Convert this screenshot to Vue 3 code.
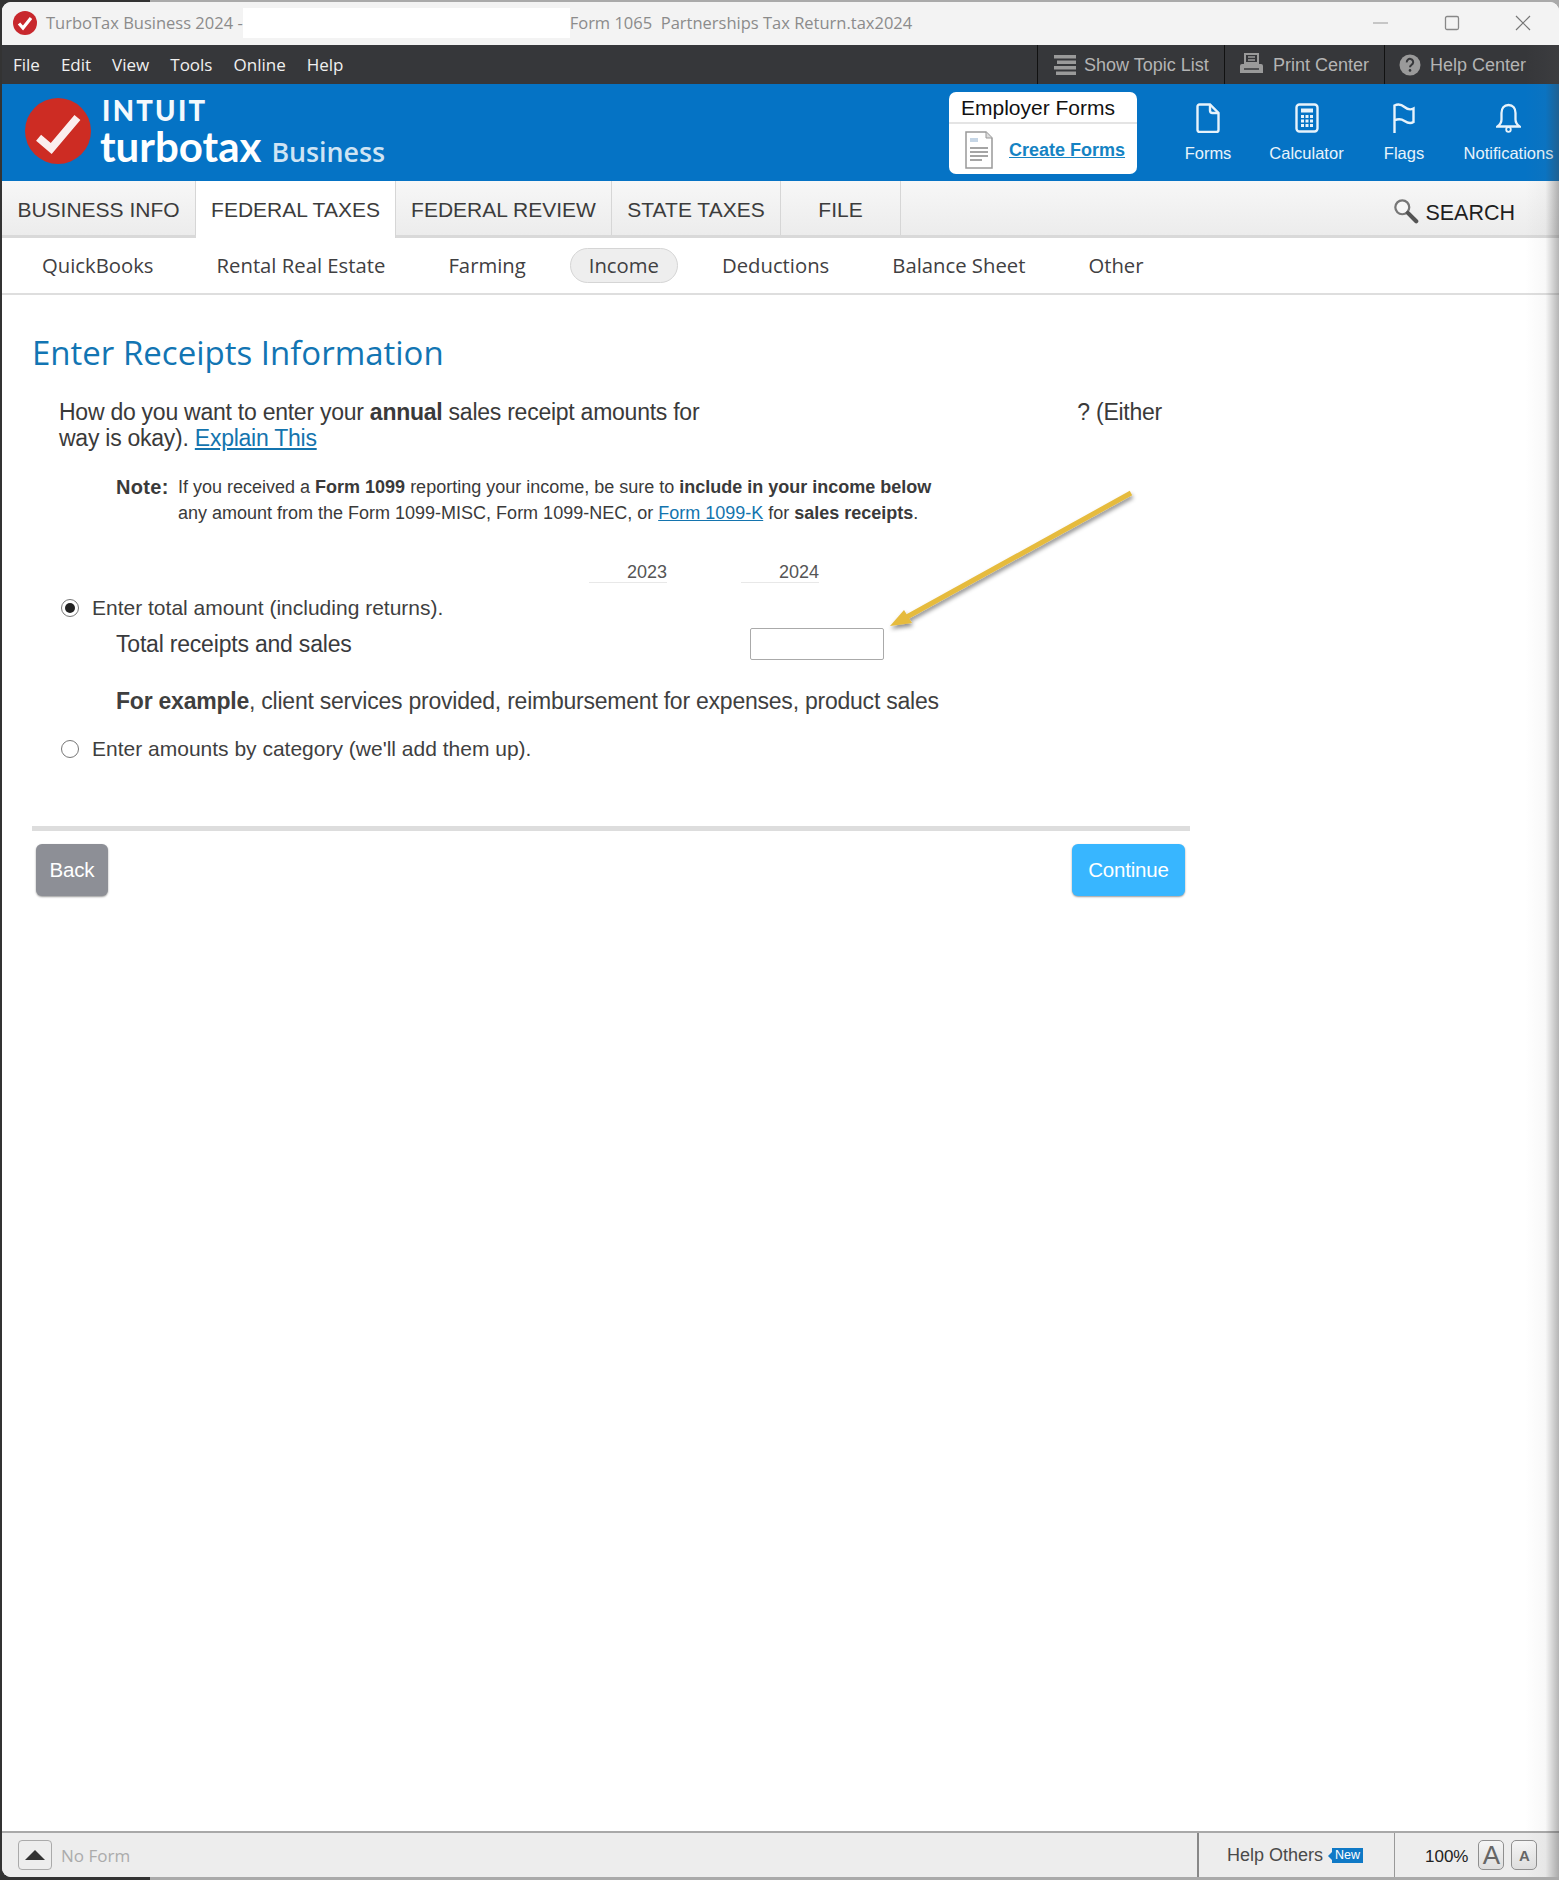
<script setup>
const menus = ['File', 'Edit', 'View', 'Tools', 'Online', 'Help']
const tabs = [
  { label: 'BUSINESS INFO', w: 194 },
  { label: 'FEDERAL TAXES', w: 200, active: true },
  { label: 'FEDERAL REVIEW', w: 216 },
  { label: 'STATE TAXES', w: 169 },
  { label: 'FILE', w: 120 }
]
const subs = ['QuickBooks', 'Rental Real Estate', 'Farming', 'Income', 'Deductions', 'Balance Sheet', 'Other']
</script>

<template>
  <div class="screen">
    <div class="window">
      <header class="titlebar">
        <svg class="app-icon" viewBox="0 0 24 24" width="24" height="24">
          <circle cx="12" cy="12" r="12" fill="#c8282d" />
          <path d="M6 12.5l4 4.5 8-10" fill="none" stroke="#fff" stroke-width="3.2" />
        </svg>
        <span class="title-text">TurboTax Business 2024 -</span>
        <span class="redact"></span>
        <span class="title-text">Form 1065&nbsp; Partnerships Tax Return.tax2024</span>
        <div class="win-controls">
          <svg width="18" height="18" viewBox="0 0 18 18"><path d="M1 9h15" stroke="#999" stroke-width="1.2" /></svg>
          <svg width="18" height="18" viewBox="0 0 18 18"><rect x="2.500" y="2.500" width="13" height="13" rx="1.500" fill="none" stroke="#888" stroke-width="1.300" /></svg>
          <svg width="18" height="18" viewBox="0 0 18 18"><path d="M2 2l14 14M16 2L2 16" stroke="#777" stroke-width="1.200" /></svg>
        </div>
      </header>

      <nav class="menubar">
        <div class="menus">
          <span v-for="m in menus" :key="m">{{ m }}</span>
        </div>
        <div class="tools">
          <div class="tool tool-topic">
            <svg width="24" height="22" viewBox="0 0 24 22"><path d="M1 1h22v3.500H1zM4 6.500h19V10H4zM1 12h22v3.500H1zM3 17.500h20V21H3z" fill="#9a9a9a" /></svg>
            <span>Show Topic List</span>
          </div>
          <div class="tool tool-print">
            <svg width="25" height="24" viewBox="0 0 25 24"><path d="M6 1h13v9H6z" fill="none" stroke="#9a9a9a" stroke-width="2" /><path d="M9 4h7M9 7h7" stroke="#9a9a9a" stroke-width="1.400" /><path d="M3 11h19a2 2 0 012 2v7H1v-7a2 2 0 012-2z" fill="#9a9a9a" /><path d="M5 16h15" stroke="#36373a" stroke-width="1.600" /></svg>
            <span>Print Center</span>
          </div>
          <div class="tool tool-help">
            <svg width="22" height="22" viewBox="0 0 22 22"><circle cx="11" cy="11" r="10.500" fill="#9a9a9a" /><path d="M7.800 8.400a3.200 3.200 0 116 1.200c-.8 1.200-2.800 1.600-2.800 3.600" fill="none" stroke="#36373a" stroke-width="2" /><circle cx="11" cy="16.400" r="1.300" fill="#36373a" /></svg>
            <span>Help Center</span>
          </div>
        </div>
      </nav>

      <section class="brandbar">
        <div class="logo">
          <svg class="logo-mark" width="66" height="66" viewBox="0 0 68 68">
            <circle cx="34" cy="34" r="34" fill="#cd2c23" />
            <path d="M14 41l13 11L54 20" fill="none" stroke="#fbeeee" stroke-width="8" />
          </svg>
          <div class="wordmark">
            <div class="intuit">INTUIT</div>
            <div class="product"><span class="turbotax">turbotax</span><span class="business">Business</span></div>
          </div>
        </div>
        <div class="brand-right">
          <div class="emp-card">
            <div class="emp-title">Employer Forms</div>
            <div class="emp-link">
              <svg width="30" height="38" viewBox="0 0 30 38">
                <path d="M2 1h20l6 6v30H2z" fill="#fff" stroke="#999" stroke-width="1.500" />
                <path d="M22 1v6h6" fill="#ddd" stroke="#999" stroke-width="1" />
                <path d="M6 9h8" stroke="#c6d6e6" stroke-width="4" />
                <path d="M6 17h18M6 21h18M6 25h18M6 29h12" stroke="#888" stroke-width="1.400" />
              </svg>
              <a class="create">Create Forms</a>
            </div>
          </div>
          <div class="brand-icon icon-forms">
            <svg width="24" height="30" viewBox="0 0 24 30"><path d="M3.500 1.500H14l8.500 8.500v17a2 2 0 01-2 2h-17a2 2 0 01-2-2v-23.500a2 2 0 012-2z" fill="none" stroke="#e8f3fb" stroke-width="2.400" /><path d="M14 1.500V7.500a2.500 2.500 0 002.500 2.500h6" fill="none" stroke="#e8f3fb" stroke-width="2.400" /></svg>
            <span>Forms</span>
          </div>
          <div class="brand-icon icon-calc">
            <svg width="24" height="30" viewBox="0 0 24 30"><rect x="1.500" y="1.500" width="21" height="27" rx="3" fill="none" stroke="#e8f3fb" stroke-width="2.400" /><rect x="6" y="5.500" width="12" height="4" fill="#e8f3fb" /><path d="M6 12h3v3H6zM10.500 12h3v3h-3zM15 12h3v3h-3zM6 16.500h3v3H6zM10.500 16.500h3v3h-3zM15 16.500h3v3h-3zM6 21h3v3H6zM10.500 21h3v3h-3zM15 21h3v3h-3z" fill="#e8f3fb" /></svg>
            <span>Calculator</span>
          </div>
          <div class="brand-icon icon-flags">
            <svg width="24" height="30" viewBox="0 0 24 30"><path d="M2.500 30V2.500c4-2 7-1 10 1.500s6 3 9 1.500V19c-3 2-6 1-9-1s-6-2.500-10-.5" fill="none" stroke="#e8f3fb" stroke-width="2.400" /></svg>
            <span>Flags</span>
          </div>
          <div class="brand-icon icon-bell">
            <svg width="25" height="30" viewBox="0 0 25 30"><path d="M12.500 2c-4.500 0-7 3.500-7 8v6.500c0 3-1.500 5-4 7h22c-2.500-2-4-4-4-7V10c0-4.500-2.500-8-7-8z" fill="none" stroke="#e8f3fb" stroke-width="2.300" /><circle cx="12.500" cy="26.500" r="2.300" fill="none" stroke="#e8f3fb" stroke-width="1.800" /></svg>
            <span>Notifications</span>
          </div>
        </div>
      </section>

      <nav class="tabs">
        <div
          v-for="t in tabs"
          :key="t.label"
          class="tab"
          :class="{ active: t.active }"
          :style="{ width: t.w + 'px' }"
        >{{ t.label }}</div>
        <div class="search">
          <svg width="26" height="26" viewBox="0 0 28 28">
            <circle cx="10" cy="10" r="7.500" fill="#f6f6f6" stroke="#777" stroke-width="2.400" />
            <path d="M16 16l9 9" stroke="#555" stroke-width="4.500" stroke-linecap="round" />
          </svg>
          <span>SEARCH</span>
        </div>
      </nav>

      <nav class="subnav">
        <span v-for="s in subs" :key="s" class="sub" :class="{ current: s === 'Income' }">{{ s }}</span>
      </nav>

      <main class="content">
        <h1>Enter Receipts Information</h1>
        <div class="body-col">
          <p class="question">
            How do you want to enter your <b>annual</b> sales receipt amounts for<span class="gap"></span>? (Either<br />
            way is okay). <a class="link">Explain This</a>
          </p>
          <div class="note">
            <b class="note-label">Note:</b>
            <p>
              If you received a <b>Form 1099</b> reporting your income, be sure to <b>include in your income below</b><br />
              any amount from the Form 1099-MISC, Form 1099-NEC, or <a class="link">Form 1099-K</a> for <b>sales receipts</b>.
            </p>
          </div>
          <div class="years">
            <span>2023</span>
            <span>2024</span>
          </div>
          <label class="radio-row first">
            <span class="radio on"></span>
            Enter total amount (including returns).
          </label>
          <div class="receipts">
            <span>Total receipts and sales</span>
            <input type="text" aria-label="Total receipts and sales" />
          </div>
          <p class="example"><b>For example</b>, client services provided, reimbursement for expenses, product sales</p>
          <label class="radio-row second">
            <span class="radio"></span>
            Enter amounts by category (we'll add them up).
          </label>
        </div>
        <div class="divider"></div>
        <div class="actions">
          <button class="btn back">Back</button>
          <button class="btn continue">Continue</button>
        </div>
      </main>

      <footer class="statusbar">
        <div class="form-nav">
          <span class="up"><i></i></span>
          <span class="noform">No Form</span>
        </div>
        <div class="help-others">
          <span>Help Others</span>
          <span class="new">New</span>
        </div>
        <div class="zoom">
          <span class="pct">100%</span>
          <span class="a big">A</span>
          <span class="a small">A</span>
        </div>
      </footer>

      <svg class="arrow" width="260" height="150" viewBox="0 0 260 150">
        <defs>
          <filter id="arrowShadow" x="-10%" y="-20%" width="120%" height="140%">
            <feDropShadow dx="1" dy="3" stdDeviation="2" flood-color="#000" flood-opacity="0.45" />
          </filter>
        </defs>
        <g filter="url(#arrowShadow)">
          <path d="M248 9L22 134" stroke="#e6bb3e" stroke-width="5" />
          <path d="M7 142l14-16 8 13z" fill="#e6bb3e" />
        </g>
      </svg>
      <div class="edge-shade"></div>
    </div>
  </div>
</template>

<style>
html, body { margin: 0; background: #333; }
</style>

<style scoped>
.screen {
  width: 1559px;
  height: 1880px;
  box-sizing: border-box;
  padding: 2px 0 3px 2px;
  background: linear-gradient(90deg, #333 0 150px, #aaa 150px);
  overflow: hidden;
  font-family: "Liberation Sans", Arial, sans-serif;
  color: #393a3d;
}
.window {
  position: relative;
  height: 100%;
  display: flex;
  flex-direction: column;
  background: #fff;
  border-radius: 9px 9px 0 9px;
  overflow: hidden;
}
.titlebar {
  height: 43px;
  flex: none;
  box-sizing: border-box;
  display: flex;
  align-items: center;
  padding: 0 0 2px 11px;
  background: #f3f3f3;
  font-family: "Open Sans", sans-serif;
  font-size: 16.500px;
  color: #8b8b8b;
}
.app-icon { margin-right: 9px; flex: none; }
.redact {
  width: 327px;
  height: 30px;
  background: #fff;
  flex: none;
}
.title-text { white-space: pre; }
.win-controls {
  margin-left: auto;
  display: flex;
  gap: 53px;
  padding-right: 27px;
}
.menubar {
  height: 39px;
  flex: none;
  display: flex;
  justify-content: space-between;
  background: #36373a;
  color: #f0f0f0;
}
.menus {
  display: flex;
  gap: 21px;
  align-items: center;
  padding-left: 11px;
  font-family: "Open Sans", sans-serif;
  font-size: 17px;
}
.tools { display: flex; font-size: 18px; color: #b4b4b4; padding-right: 5px; }
.tool {
  display: flex;
  align-items: center;
  gap: 7px;
  border-left: 1px solid #111;
  box-sizing: border-box;
  padding-top: 2px;
}
.tool svg { margin-top: -2px; }
.tool-topic { width: 187px; padding-left: 15px; }
.tool-print { width: 160px; padding-left: 14px; gap: 9px; }
.tool-help { width: 170px; padding-left: 14px; gap: 9px; }
.brandbar {
  height: 97px;
  flex: none;
  display: flex;
  justify-content: space-between;
  background: #0573c5;
  color: #fff;
}
.logo { display: flex; align-items: center; padding-left: 23px; gap: 9px; }
.logo-mark { margin-top: -4px; }
.wordmark { margin-top: 4px; }
.intuit {
  font-family: "Lato", sans-serif;
  font-weight: 900;
  font-size: 27.500px;
  letter-spacing: 2.300px;
  line-height: 26px;
  margin-left: 2px;
  color: #f4f9fd;
}
.product { display: flex; align-items: baseline; gap: 10px; line-height: 40px; margin-top: 2px; }
.turbotax {
  font-family: "Lato", sans-serif;
  font-weight: 700;
  font-size: 42px;
}
.business {
  font-family: "Open Sans", sans-serif;
  font-weight: 600;
  font-size: 26.800px;
  color: #cfe4f4;
}
.brand-right { display: flex; align-items: flex-start; padding-top: 8px; }
.emp-card {
  width: 188px;
  height: 82px;
  background: #fff;
  border-radius: 7px;
  color: #111;
}
.emp-title {
  height: 32px;
  line-height: 31px;
  padding-left: 12px;
  border-bottom: 2px solid #e4e4e4;
  box-sizing: border-box;
  font-size: 21px;
}
.emp-link {
  display: flex;
  align-items: center;
  gap: 15px;
  padding: 7px 0 0 15px;
}
.create {
  color: #1583c3;
  font-weight: 700;
  font-size: 18px;
  text-decoration: underline;
}
.brand-icon {
  display: flex;
  flex-direction: column;
  align-items: center;
  font-size: 16.500px;
  line-height: 19px;
  color: #e8f3fb;
  gap: 11px;
  padding-top: 11px;
  white-space: nowrap;
}
.icon-forms { width: 98px; margin-left: 22px; }
.icon-calc { width: 99px; }
.icon-flags { width: 96px; }
.icon-bell { width: 113px; margin-right: -6px; }
.tabs {
  height: 57px;
  flex: none;
  display: flex;
  background: linear-gradient(#f7f7f7, #ececec);
  border-bottom: 3px solid #d9d9d9;
  box-sizing: border-box;
  font-size: 21px;
  color: #3c3c3c;
}
.tab {
  box-sizing: border-box;
  display: flex;
  align-items: center;
  justify-content: center;
  padding-top: 4px;
  border-right: 1px solid #d6d6d6;
}
.tab.active {
  background: #fff;
  height: 57px;
  padding-bottom: 3px;
}
.search {
  margin-left: auto;
  display: flex;
  align-items: center;
  gap: 6px;
  padding: 10px 44px 0 0;
  color: #1f1f1f;
  font-size: 21.500px;
}
.search svg { margin-top: -4px; }
.subnav {
  height: 57px;
  flex: none;
  box-sizing: border-box;
  display: flex;
  align-items: center;
  gap: 25px;
  padding-left: 21px;
  border-bottom: 2px solid #dedede;
  font-family: "Open Sans", sans-serif;
  font-size: 20.300px;
  color: #3f4042;
}
.sub {
  height: 35px;
  line-height: 33px;
  box-sizing: border-box;
  padding: 0 18px;
  border: 1px solid transparent;
  border-radius: 18px;
}
.sub.current { background: #eee; border-color: #d5d5d5; }
.content { flex: 1; padding-left: 30px; width: 1160px; box-sizing: border-box; }
h1 {
  margin: 33px 0 0;
  font-family: "Open Sans", sans-serif;
  font-weight: 500;
  font-size: 33px;
  line-height: 50px;
  color: #1275b3;
}
.body-col { padding-left: 27px; }
.question {
  margin: 21px 0 0;
  font-size: 23px;
  line-height: 26px;
  letter-spacing: -0.25px;
  color: #3a3a3a;
  white-space: nowrap;
}
.gap { display: inline-block; width: 378px; }
.link { color: #1474ae; text-decoration: underline; }
.note {
  display: flex;
  margin: 23px 0 0 57px;
  font-size: 18px;
  line-height: 26px;
  color: #3a3a3a;
}
.note-label { width: 62px; flex: none; font-size: 20px; letter-spacing: 0.3px; }
.note p { margin: 0; white-space: nowrap; }
.years {
  display: flex;
  margin: 36px 0 0 530px;
  gap: 74px;
  font-size: 18px;
  color: #555;
}
.years span {
  width: 78px;
  text-align: right;
  border-bottom: 1px solid #e8e8e8;
  line-height: 20px;
}
.radio-row {
  display: flex;
  align-items: center;
  gap: 13px;
  font-size: 21px;
  line-height: 26px;
  color: #3f3f3f;
}
.radio-row.first { margin-top: 12px; }
.radio-row.second { margin-top: 21px; }
.radio {
  width: 18px;
  height: 18px;
  box-sizing: border-box;
  border: 1px solid #777;
  border-radius: 50%;
  margin-left: 2px;
  background: #fff;
  position: relative;
  flex: none;
}
.radio.on::after {
  content: "";
  position: absolute;
  inset: 3px;
  border-radius: 50%;
  background: #222;
}
.receipts {
  display: flex;
  align-items: center;
  padding-left: 57px;
  margin-top: 4px;
  font-size: 23px;
  letter-spacing: -0.2px;
  height: 38px;
}
.receipts span { width: 634px; flex: none; }
.receipts input {
  width: 134px;
  height: 32px;
  box-sizing: border-box;
  border: 1px solid #aaa;
  border-radius: 2px;
  background: #fff;
  padding: 0;
}
.example {
  margin: 24px 0 0 57px;
  font-size: 23px;
  line-height: 28px;
  letter-spacing: -0.23px;
  color: #3f3f3f;
  white-space: nowrap;
}
.divider {
  width: 1158px;
  height: 5px;
  margin-top: 64px;
  background: #ddd;
}
.actions {
  display: flex;
  justify-content: space-between;
  margin: 13px 0 0 4px;
  width: 1149px;
}
.btn {
  height: 52px;
  border: none;
  border-radius: 6px;
  color: #fff;
  font-family: "Liberation Sans", Arial, sans-serif;
  font-size: 20.500px;
  padding: 0;
  letter-spacing: -0.2px;
  box-shadow: 0 1px 2px rgba(0, 0, 0, 0.4);
}
.back { width: 72px; background: #8d8f96; }
.continue { width: 113px; background: #38b6ff; }
.statusbar {
  flex: none;
  display: flex;
  border-top: 2px solid #a9a9a9;
  box-sizing: border-box;
  background: #ededed;
  height: 46px;
}
.form-nav {
  width: 1197px;
  box-sizing: border-box;
  display: flex;
  align-items: center;
  padding-left: 16px;
  border-right: 2px solid #888;
  gap: 9px;
}
.up {
  width: 34px;
  height: 30px;
  box-sizing: border-box;
  border: 1px solid #aaa;
  border-radius: 4px;
  display: flex;
  align-items: center;
  justify-content: center;
}
.up i {
  width: 0;
  height: 0;
  border-left: 10px solid transparent;
  border-right: 10px solid transparent;
  border-bottom: 10px solid #333;
}
.noform { font-family: "Open Sans", sans-serif; font-size: 17px; color: #ababab; }
.help-others {
  width: 196px;
  box-sizing: border-box;
  display: flex;
  align-items: center;
  gap: 9px;
  padding: 1px 0 0 28px;
  border-right: 1px solid #999;
  font-size: 18px;
  color: #4a4a4a;
}
.new {
  position: relative;
  background: #0f79c6;
  color: #fff;
  font-size: 12.500px;
  line-height: 15px;
  padding: 0 3px;
}
.new::before {
  content: "";
  position: absolute;
  left: -4px;
  top: 4px;
  border-top: 4px solid transparent;
  border-bottom: 4px solid transparent;
  border-right: 4px solid #0f79c6;
}
.zoom { display: flex; align-items: center; padding-left: 30px; font-size: 17px; color: #222; }
.pct { margin-right: 10px; padding-top: 3px; }
.a {
  height: 30px;
  box-sizing: border-box;
  display: flex;
  align-items: center;
  justify-content: center;
  border: 1px solid #8f8f8f;
  border-radius: 5px;
  color: #666;
  background: linear-gradient(#f5f5f5, #dedede);
}
.a.big { width: 26px; font-size: 26px; margin-right: 7px; }
.a.small { width: 26px; font-size: 15px; font-weight: 700; }
.arrow {
  position: absolute;
  left: 881px;
  top: 482px;
  pointer-events: none;
}
.edge-shade {
  position: absolute;
  top: 43px;
  right: 0;
  bottom: 0;
  width: 34px;
  background: linear-gradient(90deg, rgba(120, 120, 120, 0), rgba(120, 120, 120, 0.05) 60%, rgba(70, 70, 70, 0.4));
  pointer-events: none;
}
</style>
